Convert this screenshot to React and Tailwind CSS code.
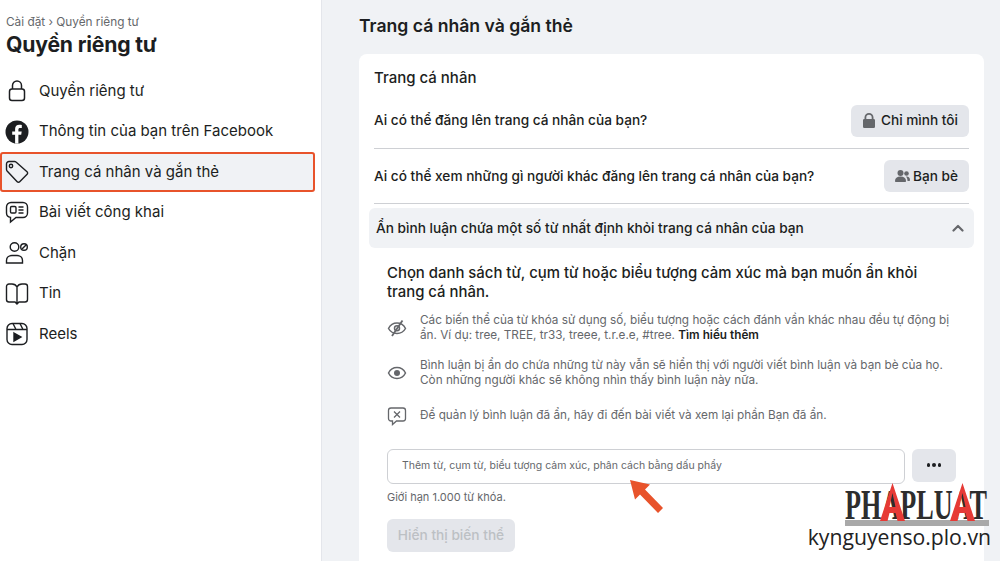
const inter = { fontFamily: 'Inter, "Noto Sans", sans-serif' };

const LockIcon = () => (
  <svg width="24" height="24" viewBox="0 0 24 24" fill="none" stroke="#1c1e21" strokeWidth="1.5">
    <rect x="4.500" y="10" width="15" height="11.500" rx="2.500" />
    <path d="M7.500 10V6.500a4.500 4.500 0 0 1 9 0V10" />
  </svg>
);

const FbIcon = () => (
  <svg width="24" height="24" viewBox="0 0 24 24">
    <circle cx="12" cy="12" r="11.500" fill="#1c1e21" />
    <path d="M13.400 23.500v-8.700h2.800l.5-3.300h-3.300V9.600c0-1 .4-1.700 1.800-1.700h1.600V5c-.6-.1-1.500-.2-2.500-.2-2.600 0-4.200 1.500-4.200 4.300v2.400H7.200v3.300h2.900v8.700z" fill="#fff" />
  </svg>
);

const TagIcon = () => (
  <svg width="24" height="24" viewBox="0 0 24 24" fill="none" stroke="#1c1e21" strokeWidth="1.400">
    <path d="M1.500 4A2.500 2.500 0 0 1 4 1.500h5.500a2 2 0 0 1 1.500.6l11 9.700a1.700 1.700 0 0 1 .1 2.500l-7.400 7.400a1.700 1.700 0 0 1-2.500 0L2.100 11a2.500 2.500 0 0 1-.6-1.500z" />
    <circle cx="6" cy="6" r="1.700" />
  </svg>
);

const PostIcon = () => (
  <svg width="24" height="24" viewBox="0 0 24 24" fill="none" stroke="#1c1e21" strokeWidth="1.400">
    <path d="M6 1.500h12a4.500 4.500 0 0 1 4.500 4.500v6a4.500 4.500 0 0 1-4.500 4.500h-7L5.500 21v-4.600A4.500 4.500 0 0 1 1.500 12V6A4.500 4.500 0 0 1 6 1.500z" />
    <rect x="5.500" y="5.500" width="5.500" height="6.500" rx="1.200" />
    <path d="M13.500 6h5M13.500 9h5M13.500 12h5" />
  </svg>
);

const BlockIcon = () => (
  <svg width="24" height="24" viewBox="0 0 24 24" fill="none" stroke="#1c1e21" strokeWidth="1.400">
    <circle cx="9.500" cy="6" r="4.300" />
    <path d="M1.500 22v-2.500c0-3 2.500-5 5.500-5h5c3 0 5.500 2 5.500 5V22z" />
    <circle cx="19" cy="6" r="3.300" />
    <path d="M17 8l4-4" />
  </svg>
);

const BookIcon = () => (
  <svg width="24" height="24" viewBox="0 0 24 24" fill="none" stroke="#1c1e21" strokeWidth="1.400">
    <path d="M12 5c-1-2-3-3-5-3H4a2.500 2.500 0 0 0-2.500 2.500v13A2.500 2.500 0 0 0 4 20h6l2 2 2-2h6a2.500 2.500 0 0 0 2.500-2.500v-13A2.500 2.500 0 0 0 20 2h-3c-2 0-4 1-5 3zm0 0v16" />
  </svg>
);

const ReelsIcon = () => (
  <svg width="24" height="24" viewBox="0 0 24 24" fill="none" stroke="#1c1e21" strokeWidth="1.400">
    <rect x="2" y="1.500" width="20" height="21" rx="5" />
    <path d="M2 7.500h20M8 1.500l3 6M15 1.500l3 6" />
    <path d="M9 11l7 4-7 4z" fill="#1c1e21" />
  </svg>
);

const EyeOffIcon = () => (
  <svg width="20" height="20" viewBox="0 0 20 20" fill="none" stroke="#65676b" strokeWidth="1.500">
    <path d="M1.500 10.500C3.500 6.500 6.500 5 10 5s6.500 1.500 8.500 5.500C16.500 14 13.500 15.500 10 15.500S3.500 14 1.500 10.500z" />
    <circle cx="10" cy="10.300" r="2.500" />
    <path d="M15.500 2.500L5 18" strokeWidth="1.800" />
  </svg>
);

const EyeIcon = () => (
  <svg width="20" height="20" viewBox="0 0 20 20" fill="none" stroke="#65676b" strokeWidth="1.500">
    <path d="M1.500 10C3.500 6 6.500 4.500 10 4.500S16.500 6 18.500 10C16.500 14 13.500 15.500 10 15.500S3.500 14 1.500 10z" />
    <circle cx="10" cy="10" r="3" fill="#65676b" stroke="none" />
  </svg>
);

const CommentXIcon = () => (
  <svg width="20" height="20" viewBox="0 0 20 20" fill="none" stroke="#65676b" strokeWidth="1.300">
    <path d="M4 2h12a2.500 2.500 0 0 1 2.500 2.500v8A2.500 2.500 0 0 1 16 15H9.500L5.500 18.500V15H4a2.500 2.500 0 0 1-2.500-2.500v-8A2.500 2.500 0 0 1 4 2z" />
    <path d="M7 5.500l6 6M13 5.500l-6 6" />
  </svg>
);

const LogoA = () => (
  <svg width="25" height="38" viewBox="0 0 25 38">
    <path fillRule="evenodd" d="M12.500 0L25 38H17.500L15.500 30H9.500L7.500 38H0zM12.500 10L9.500 24H15.500z" fill="#e63a35" />
  </svg>
);

const menu = [
  { label: 'Quyền riêng tư', icon: <LockIcon /> },
  { label: 'Thông tin của bạn trên Facebook', icon: <FbIcon /> },
  { label: 'Trang cá nhân và gắn thẻ', icon: <TagIcon />, active: true },
  { label: 'Bài viết công khai', icon: <PostIcon /> },
  { label: 'Chặn', icon: <BlockIcon /> },
  { label: 'Tin', icon: <BookIcon /> },
  { label: 'Reels', icon: <ReelsIcon /> },
];

const notes = [
  {
    icon: <EyeOffIcon />,
    cls: 'flex items-center gap-[13px]',
    body: (
      <>
        Các biến thể của từ khóa sử dụng số, biểu tượng hoặc cách đánh vần khác nhau đều tự động bị ẩn. Ví dụ: tree, TREE, tr33, treee, t.r.e.e, #tree.{' '}
        <span className="font-semibold text-[#1c1e21]">Tìm hiểu thêm</span>
      </>
    ),
  },
  {
    icon: <EyeIcon />,
    cls: 'flex items-center gap-[13px]',
    body: 'Bình luận bị ẩn do chứa những từ này vẫn sẽ hiển thị với người viết bình luận và bạn bè của họ. Còn những người khác sẽ không nhìn thấy bình luận này nữa.',
  },
  {
    icon: <CommentXIcon />,
    cls: 'mt-[3px] flex items-center gap-[13px]',
    body: 'Để quản lý bình luận đã ẩn, hãy đi đến bài viết và xem lại phần Bạn đã ẩn.',
  },
];

export default function App() {
  return (
    <div className="relative flex h-[561px] w-[1000px] overflow-hidden bg-[#f0f2f5] text-[#1c1e21]" style={inter}>
      <aside className="h-full w-[322px] shrink-0 border-r border-[#e4e6eb] bg-white">
        <div className="pl-[6px] pt-[14px]">
          <p className="text-[11.800px] leading-[16px] text-[#65676b]">Cài đặt › Quyền riêng tư</p>
          <h1 className="text-[21.200px] font-bold leading-[28px] tracking-[-0.2px]">Quyền riêng tư</h1>
        </div>
        <nav className="mt-[13px] flex flex-col gap-[0.5px]">
          {menu.map((item) => (
            <div
              key={item.label}
              className={
                item.active
                  ? 'mr-[6px] flex h-[40px] items-center gap-[10px] rounded-[3px] border-2 border-[#e8532b] bg-[#f0f2f5] pl-[3px] text-[15px]'
                  : 'mr-[6px] flex h-[40px] items-center gap-[10px] pl-[5px] text-[15px]'
              }
            >
              <span className="flex h-[24px] w-[24px] shrink-0 items-center justify-center">{item.icon}</span>
              <span>{item.label}</span>
            </div>
          ))}
        </nav>
      </aside>

      <main className="min-w-0 flex-1 pl-[37px] pr-[16px] pt-[14px]">
        <h2 className="text-[17.600px] font-semibold leading-[24px]">Trang cá nhân và gắn thẻ</h2>
        <section className="mt-[16px] rounded-t-[8px] bg-white px-[15px] pb-[16px] pt-[14px]">
          <h3 className="text-[15px] font-medium leading-[20px]">Trang cá nhân</h3>

          <div className="mt-[5px] flex h-[56px] items-center justify-between border-b border-[#ced0d4]">
            <p className="text-[13.650px] font-medium">Ai có thể đăng lên trang cá nhân của bạn?</p>
            <button className="flex h-[32px] items-center gap-[6px] rounded-[6px] bg-[#e4e6eb] pl-[12px] pr-[11px] text-[13.650px] font-medium">
              <svg width="12" height="15" viewBox="0 0 12 15" fill="#65676b">
                <path d="M1.500 6V4.500a4.500 4.500 0 0 1 9 0V6h.2A1.300 1.300 0 0 1 12 7.300v6.400a1.300 1.300 0 0 1-1.300 1.300H1.300A1.300 1.300 0 0 1 0 13.700V7.300A1.300 1.300 0 0 1 1.300 6zm1.800 0h5.400V4.500a2.700 2.700 0 0 0-5.400 0z" />
              </svg>
              Chỉ mình tôi
            </button>
          </div>

          <div className="flex h-[55px] items-center justify-between border-b border-[#ced0d4]">
            <p className="text-[13.650px] font-medium">Ai có thể xem những gì người khác đăng lên trang cá nhân của bạn?</p>
            <button className="flex h-[32px] items-center gap-[3px] rounded-[6px] bg-[#e4e6eb] pl-[11px] pr-[11px] text-[13.650px] font-medium">
              <svg width="15" height="12" viewBox="0 0 15 12" fill="#65676b">
                <circle cx="5.500" cy="3" r="3" />
                <path d="M0 11c0-3 2-4.500 5.500-4.500S11 8 11 11c0 .6-.4 1-1 1H1c-.6 0-1-.4-1-1z" />
                <circle cx="11.500" cy="3.500" r="2.300" />
                <path d="M11 6.500c2.500-.3 4 1.200 4 3.500 0 .6-.4 1-1 1h-1.500c0-1.800-.5-3.300-1.500-4.500z" />
              </svg>
              Bạn bè
            </button>
          </div>

          <div className="-mx-[5px] mt-[4px] flex h-[40px] items-center justify-between rounded-[6px] bg-[#f0f2f5] pl-[7px] pr-[10px]">
            <p className="text-[13.680px] font-medium">Ẩn bình luận chứa một số từ nhất định khỏi trang cá nhân của bạn</p>
            <svg width="12" height="8" viewBox="0 0 12 8" fill="none" stroke="#65676b" strokeWidth="2.200" strokeLinecap="round" strokeLinejoin="round">
              <path d="M1.500 6.500L6 2l4.500 4.500" />
            </svg>
          </div>

          <div className="pl-[13px] pr-[13px]">
            <p className="mt-[16px] pr-[5px] text-[14.900px] font-medium leading-[18.500px]">
              Chọn danh sách từ, cụm từ hoặc biểu tượng cảm xúc mà bạn muốn ẩn khỏi trang cá nhân.
            </p>

            <div className="mt-[11.500px] flex flex-col gap-[15px] pr-[5px]">
              {notes.map((note, i) => (
                <div key={i} className={note.cls}>
                  <span className="flex w-[20px] shrink-0 justify-center">{note.icon}</span>
                  <p className="text-[11.750px] leading-[15px] text-[#65676b]">{note.body}</p>
                </div>
              ))}
            </div>

            <div className="mt-[23px] flex items-start gap-[7px]">
              <div className="flex h-[35px] w-[518px] shrink-0 items-center rounded-[6px] border border-[#ced0d4] bg-white pl-[14px] text-[10.500px] text-[#65676b]">
                Thêm từ, cụm từ, biểu tượng cảm xúc, phân cách bằng dấu phẩy
              </div>
              <button className="flex h-[33px] w-[44px] items-center justify-center gap-[2px] rounded-[6px] bg-[#e4e6eb]">
                <span className="h-[3.5px] w-[3.5px] rounded-full bg-[#1c1e21]" />
                <span className="h-[3.5px] w-[3.5px] rounded-full bg-[#1c1e21]" />
                <span className="h-[3.5px] w-[3.5px] rounded-full bg-[#1c1e21]" />
              </button>
            </div>

            <p className="mt-[6px] text-[11px] leading-[14px] text-[#65676b]">Giới hạn 1.000 từ khóa.</p>

            <button className="mt-[15px] flex h-[33px] w-[128px] items-center justify-center rounded-[6px] bg-[#e4e6eb] text-[13.700px] font-medium text-[#bcc0c4]">
              Hiển thị biến thể
            </button>
          </div>
        </section>
      </main>

      {/* red arrow over the input */}
      <svg className="absolute left-[628px] top-[478px]" width="38" height="37" viewBox="0 0 38 37">
        <path d="M2 2L22 6.500 17 11.500 35 30 30 35 12 16.500 7 21.500z" fill="#e8532b" />
      </svg>

      {/* watermark */}
      <div className="absolute left-[805px] top-[483px] flex w-[186px] flex-col items-end">
        <div className="relative mr-[2px] h-[37px] w-[144px]">
          <span
            className="absolute left-0 top-[6px] origin-left scale-x-[0.623] whitespace-nowrap text-[42px] font-bold leading-[32px] text-[#2d2d2d]"
            style={{ fontFamily: '"Liberation Serif", serif' }}
          >
            PHAPLUAT
          </span>
          <span className="absolute left-[35px] top-0">
            <LogoA />
          </span>
          <span className="absolute left-[105px] top-0">
            <LogoA />
          </span>
        </div>
        <div className="mr-[2px] h-[6px] w-[144px] bg-[#a9a9a9]" />
        <p className="whitespace-nowrap text-[21.200px] leading-[22px] text-[#222]" style={{ fontFamily: '"Open Sans", sans-serif' }}>
          kynguyenso.plo.vn
        </p>
      </div>
    </div>
  );
}
